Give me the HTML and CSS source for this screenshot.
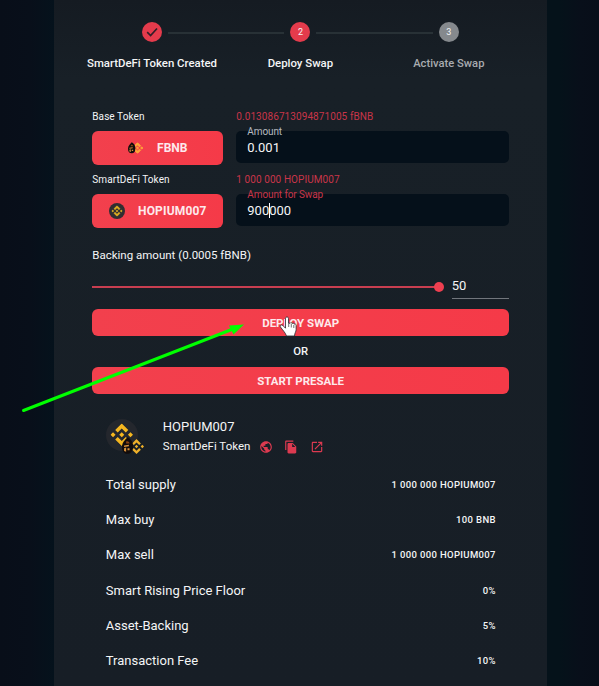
FILE: index.html
```html
<!DOCTYPE html>
<html lang="en">
<head>
<meta charset="utf-8">
<title>Deploy Swap</title>
<link rel="stylesheet" href="styles.css">
</head>
<body>
<svg class="defs" aria-hidden="true">
  <defs>
    <symbol id="bnb" viewBox="0 0 24 24">
      <path d="M12 0 5 7l2.700 2.700L12 5.400l4.300 4.300L19 7zM0 12l2.700-2.700L5.400 12l-2.700 2.700zM12 9.300l2.700 2.700-2.700 2.700L9.300 12zM18.600 12l2.700-2.700L24 12l-2.700 2.700zM5 17l2.700-2.700 4.300 4.300 4.300-4.300L19 17l-7 7z"/>
    </symbol>
    <symbol id="hood" viewBox="0 0 16 24">
      <path fill="#120c0b" d="M8 0c4 2 8 6 8 13s-3 11-8 11-8-4-8-10S4 4 8 0z"/>
      <path fill="#8a4312" d="M6 6c3-1 5 1 5 3H6z"/>
      <path fill="#d9923a" d="M3 12l7-1v2l-7 1zM3 16l3-1v6l-3-1zM8 16h3v3H8z"/>
    </symbol>
  </defs>
</svg>
<main class="panel">
  <ol class="stepper">
    <li class="step">
      <span class="dot"><svg viewBox="0 0 20 20"><path d="m5.200 10.200 3.400 3.300L15 6.500" fill="none" stroke="#301e28" stroke-width="1.700"/></svg></span>
      <span class="step-label">SmartDeFi Token Created</span>
    </li>
    <li class="step">
      <span class="dot">2</span>
      <span class="step-label">Deploy Swap</span>
    </li>
    <li class="step pending">
      <span class="dot">3</span>
      <span class="step-label">Activate Swap</span>
    </li>
  </ol>

  <section class="pair">
    <div class="caption">Base Token</div>
    <div class="caption red">0.013086713094871005 fBNB</div>
    <button class="btn token">
      <svg class="fbnb" viewBox="0 0 15 14"><use href="#bnb" x="4" y="1.500" width="11" height="11" fill="#ffa63a" stroke="#ffa63a" stroke-width="1.500"/><use href="#hood" x="0" y="1" width="7.500" height="11.500"/></svg>
      <span>FBNB</span>
    </button>
    <label class="field"><span class="legend">Amount</span><span class="value">0.001</span></label>
  </section>
  <section class="pair second">
    <div class="caption">SmartDeFi Token</div>
    <div class="caption red">1 000 000 HOPIUM007</div>
    <button class="btn token">
      <svg class="coin" viewBox="0 0 16 16"><circle cx="8" cy="8" r="8" fill="#302e31"/><use href="#bnb" x="2.500" y="2.500" width="11" height="11" fill="#dcae22" stroke="#dcae22" stroke-width=".5"/></svg>
      <span class="tracked">HOPIUM007</span>
    </button>
    <label class="field"><span class="legend red">Amount for Swap</span><span class="value">900<i class="caret"></i>000</span></label>
  </section>

  <div class="backing">Backing amount (0.0005 fBNB)</div>
  <div class="slider-row">
    <div class="track"><span class="thumb"></span></div>
    <div class="number">50</div>
  </div>
  <button class="btn wide">DEPLOY SWAP</button>
  <div class="or">OR</div>
  <button class="btn wide">START PRESALE</button>

  <section class="details">
    <header class="head">
      <svg class="logo" viewBox="0 0 40 38">
        <circle cx="16" cy="16" r="16" fill="#24272d"/>
        <use href="#bnb" x="4.500" y="4.500" width="22.500" height="22.500" fill="#f4b61f"/>
        <use href="#bnb" x="23" y="20" width="15" height="15" fill="#eeb02a"/>
        <use href="#hood" x="16" y="18" width="11" height="17"/>
      </svg>
      <div class="names">
        <div class="title">HOPIUM007</div>
        <div class="sub"><span>SmartDeFi Token</span>
          <svg class="ico" viewBox="0 0 24 24"><path d="M12 2C6.480 2 2 6.480 2 12s4.480 10 10 10 10-4.480 10-10S17.520 2 12 2zm-1 17.930c-3.950-.49-7-3.850-7-7.930 0-.62.080-1.210.210-1.790L9 15v1c0 1.100.900 2 2 2v1.930zm6.900-2.540c-.26-.81-1-1.390-1.900-1.390h-1v-3c0-.55-.45-1-1-1H8v-2h2c.55 0 1-.45 1-1V7h2c1.100 0 2-.9 2-2v-.41c2.930 1.190 5 4.060 5 7.410 0 2.080-.8 3.970-2.100 5.390z"/></svg>
          <svg class="ico" viewBox="0 0 24 24"><path d="M16 1H4c-1.100 0-2 .9-2 2v14h2V3h12V1zm-1 4 6 6v10c0 1.100-.9 2-2 2H7.990C6.890 23 6 22.100 6 21l.010-14c0-1.100.890-2 1.990-2h7zm-1 7h5.500L14 6.500V12z"/></svg>
          <svg class="ico" viewBox="0 0 24 24"><path d="M19 19H5V5h7V3H5c-1.110 0-2 .9-2 2v14c0 1.100.890 2 2 2h14c1.100 0 2-.9 2-2v-7h-2v7zM14 3v2h3.590l-9.830 9.830 1.410 1.410L19 6.410V10h2V3h-7z"/></svg>
        </div>
      </div>
    </header>
    <dl class="rows">
      <div class="row"><dt>Total supply</dt><dd>1 000 000 HOPIUM007</dd></div>
      <div class="row"><dt>Max buy</dt><dd>100 BNB</dd></div>
      <div class="row"><dt>Max sell</dt><dd>1 000 000 HOPIUM007</dd></div>
      <div class="row"><dt>Smart Rising Price Floor</dt><dd>0%</dd></div>
      <div class="row"><dt>Asset-Backing</dt><dd>5%</dd></div>
      <div class="row"><dt>Transaction Fee</dt><dd>10%</dd></div>
    </dl>
  </section>
</main>
<svg class="overlay" viewBox="0 0 599 686" aria-hidden="true">
  <path d="M23.500 410.500 233 329" stroke="#0f0" stroke-width="3" stroke-linecap="round"/>
  <path d="M244 324.500 229 325.500l4.500 9z" fill="#0f0"/>
  <path d="M285.500 318.500c0-2 3-2 3 0v4.500l1.600.3c.4-1 2-.8 2.100.3.600-.8 2-.5 2.100.6.700-.6 1.800-.1 1.800 1v4.500c0 2-1.400 3-1.600 6.300h-8c-1.200-3.500-3.500-5.500-6.200-9.200-.8-1.600 1.300-2.600 2.600-1.300l2.600 2.700z" fill="#fff" stroke="#222b30" stroke-width=".8"/>
  <path d="M288.700 323v4M291.300 324v3.500M293.800 325v3" stroke="#333" stroke-width=".7"/>
</svg>
</body>
</html>
```
FILE: styles.css
```css
* { box-sizing: border-box; }
body {
  margin: 0;
  height: 686px;
  overflow: hidden;
  position: relative;
  background: linear-gradient(90deg, #080e19 0, #080f1a 30px, #05121c 54px, #05121a 560px, #080f1a 580px, #080e19 599px);
  color: #f4f5f6;
  font: 500 12px/16px Roboto, sans-serif;
}
.defs { display: none; }
.panel {
  width: 493px;
  height: 686px;
  margin-left: 54px;
  padding: 22px 38px 0 38.3px;
  background: linear-gradient(#151b22, #182027 80px, #171e26);
}
.stepper {
  display: flex;
  margin: 0 -14px 0 -14.500px;
  padding: 0;
  list-style: none;
  height: 86px;
}
.step {
  flex: 1;
  display: flex;
  flex-direction: column;
  align-items: center;
  gap: 13px;
  position: relative;
}
.step + .step::before {
  content: "";
  position: absolute;
  top: 10px;
  left: calc(-50% + 16px);
  right: calc(50% + 16px);
  height: 2px;
  background: #283136;
}
.dot {
  width: 20px;
  height: 20px;
  border-radius: 50%;
  background: #e43b4c;
  font: 400 9px/20px Roboto, sans-serif;
  text-align: center;
}
.dot svg { display: block; }
.pending .dot { background: #85898d; }
.pending .step-label { color: #a8abaf; font-size: 11.2px; }
.step-label { white-space: nowrap; font-size: 11.4px; line-height: 17px; }
.pair {
  display: grid;
  grid-template-columns: 131px 272.7px;
  grid-template-rows: 23px 34px;
  column-gap: 13px;
}
.second { margin-top: 6px; }
.caption { font: 400 10px/18px Roboto, sans-serif; letter-spacing: .08px; white-space: nowrap; }
.red { color: #c93549; }
.btn {
  display: flex;
  align-items: center;
  justify-content: center;
  border: 0;
  padding: 0;
  border-radius: 6px;
  background: linear-gradient(90deg, #f2404d, #f53a48);
  color: #fde9ec;
  font: 700 12px/16px Roboto, sans-serif;
}
.tracked { letter-spacing: .15px; }
.fbnb { width: 15px; height: 14px; margin-right: 14px; }
.coin { width: 16px; height: 16px; margin-right: 13px; }
.field {
  position: relative;
  height: 32px;
  padding: 8px 11px;
  border-radius: 5px;
  background: #05101a;
}
.legend {
  position: absolute;
  top: -7px;
  left: 11px;
  font: 400 10px/16px Roboto, sans-serif;
  letter-spacing: -.1px;
  white-space: nowrap;
}
.legend:not(.red) { color: #b7bbc0; }
.value { display: block; font: 400 13px/18px Roboto, sans-serif; }
.caret {
  display: inline-block;
  width: 1px;
  height: 15px;
  margin: 0 -1px 0 0;
  vertical-align: -3px;
  background: #fff;
}
.backing { margin-top: 19px; height: 30px; font-size: 11.5px; font-weight: 400; line-height: 17px; }
.slider-row { display: flex; align-items: flex-start; height: 32px; }
.track {
  position: relative;
  width: 346.5px;
  height: 2px;
  margin-top: 9px;
  background: #c83e50;
}
.thumb {
  position: absolute;
  right: -5px;
  top: -4px;
  width: 10px;
  height: 10px;
  border-radius: 50%;
  background: #ee3f50;
}
.number {
  width: 57px;
  height: 22px;
  margin-left: 13px;
  padding-top: 1px;
  border-bottom: 1px solid #71767c;
  font: 400 13px/16px Roboto, sans-serif;
}
.wide { width: 416.700px; height: 27px; font-size: 11.5px; }
.or { height: 31px; line-height: 31px; text-align: center; font-size: 11.3px; }
.details { padding: 25.4px 13.5px 0; }
.head { display: flex; height: 48px; }
.logo { width: 40px; height: 38px; margin-right: 17px; }
.title { font: 400 13px/16px Roboto, sans-serif; }
.sub { display: flex; align-items: center; gap: 11.5px; height: 21.500px; font-size: 11.5px; font-weight: 400; }
.sub span { margin-right: -3px; }
.ico { width: 14px; height: 14px; fill: #dc3a50; margin-top: 1px; }
.rows { margin: 0; }
.row { display: flex; justify-content: space-between; align-items: center; height: 35.2px; }
dt { font: 400 13px/18px Roboto, sans-serif; }
dd { margin: 0 -.35px 0 0; font: 500 9.5px/18px Roboto, sans-serif; letter-spacing: .35px; }
.overlay {
  position: absolute;
  inset: 0;
  width: 599px;
  height: 686px;
  pointer-events: none;
}
```
